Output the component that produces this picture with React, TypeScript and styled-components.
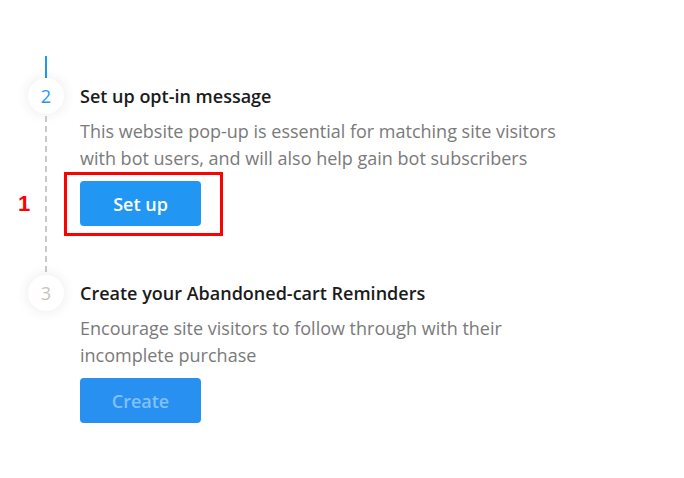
import styled, { createGlobalStyle, css } from 'styled-components'

const GlobalStyle = createGlobalStyle`
  html, body {
    margin: 0;
    padding: 0;
    background: #ffffff;
  }

  body {
    font-family: 'Open Sans', 'Noto Sans', sans-serif;
  }
`

type StepData = {
  num: number
  title: string
  description: string[]
  action: string
  active: boolean
  last: boolean
}

const steps: StepData[] = [
  {
    num: 2,
    title: 'Set up opt-in message',
    description: [
      'This website pop-up is essential for matching site visitors',
      'with bot users, and will also help gain bot subscribers'
    ],
    action: 'Set up',
    active: true,
    last: false
  },
  {
    num: 3,
    title: 'Create your Abandoned-cart Reminders',
    description: [
      'Encourage site visitors to follow through with their',
      'incomplete purchase'
    ],
    action: 'Create',
    active: false,
    last: true
  }
]

export default function App () {
  return (
    <>
      <GlobalStyle />
      <Page>
        <Lead />
        <StepList>
          {steps.map((step) => (
            <Step key={step.num}>
              <Marker>
                <Circle $active={step.active}>{step.num}</Circle>
                {!step.last && <Dashes />}
              </Marker>
              <Body $last={step.last}>
                <Title>{step.title}</Title>
                <Description>
                  {step.description.map((line) => (
                    <span key={line}>{line}</span>
                  ))}
                </Description>
                <ActionWrap>
                  <ActionButton $disabled={!step.active}>{step.action}</ActionButton>
                  {step.active && (
                    <Highlight>
                      <HighlightLabel>1</HighlightLabel>
                    </Highlight>
                  )}
                </ActionWrap>
              </Body>
            </Step>
          ))}
        </StepList>
      </Page>
    </>
  )
}

const Page = styled.div`
  width: 684px;
  height: 478px;
  box-sizing: border-box;
  padding: 56px 0 0 28px;
  display: flex;
  flex-direction: column;
`

const Lead = styled.div`
  width: 2px;
  height: 22px;
  margin-left: 17px;
  background: #2196f3;
`

const StepList = styled.div`
  display: flex;
  flex-direction: column;
`

const Step = styled.div`
  display: flex;
  gap: 16px;
`

const Marker = styled.div`
  width: 36px;
  flex: none;
  display: flex;
  flex-direction: column;
  align-items: center;
`

const Circle = styled.div<{ $active: boolean }>`
  width: 36px;
  height: 36px;
  border-radius: 50%;
  background: #ffffff;
  box-shadow: 0 0 14px rgba(0, 0, 0, 0.09);
  display: flex;
  align-items: center;
  justify-content: center;
  font-size: 18px;
  font-weight: 500;
  color: ${(p) => (p.$active ? '#2196f3' : '#c4c4c4')};
  flex: none;
`

const Dashes = styled.div`
  flex: 1;
  width: 2px;
  margin-top: 2px;
  background: repeating-linear-gradient(
    to bottom,
    #c9c9c9 0,
    #c9c9c9 6px,
    transparent 6px,
    transparent 10px
  );
`

const Body = styled.div<{ $last: boolean }>`
  display: flex;
  flex-direction: column;
  align-items: flex-start;
  padding-bottom: ${(p) => (p.$last ? '0' : '49px')};
`

const Title = styled.div`
  font-size: 18px;
  font-weight: 600;
  line-height: 36px;
  color: #1b1b1b;
`

const Description = styled.div`
  margin-top: 4px;
  font-size: 18px;
  line-height: 27px;
  color: #7a7a7a;
  display: flex;
  flex-direction: column;
`

const ActionWrap = styled.div`
  position: relative;
  margin-top: 9px;
`

const ActionButton = styled.button<{ $disabled: boolean }>`
  width: 121px;
  height: 45px;
  border: none;
  border-radius: 4px;
  background: #2196f3;
  font-family: inherit;
  font-size: 18px;
  font-weight: 600;
  color: #ffffff;
  cursor: pointer;

  ${(p) =>
    p.$disabled &&
    css`
      background: #2890f0;
      color: #82c0f8;
      cursor: default;
    `}
`

const Highlight = styled.div`
  position: absolute;
  left: -16px;
  top: -9px;
  width: 159px;
  height: 64px;
  box-sizing: border-box;
  border: 3px solid #ff0000;
  pointer-events: none;
`

const HighlightLabel = styled.span`
  position: absolute;
  left: -49px;
  top: 16px;
  font-family: 'Liberation Sans', Arial, sans-serif;
  font-size: 22px;
  font-weight: 700;
  color: #ff0000;
`
